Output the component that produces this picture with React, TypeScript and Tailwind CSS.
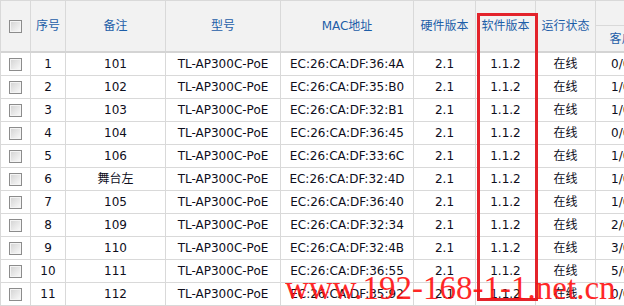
const rows: { no: number; note: string; mac: string; clients: string }[] = [
  { no: 1, note: '101', mac: 'EC:26:CA:DF:36:4A', clients: '0/0' },
  { no: 2, note: '102', mac: 'EC:26:CA:DF:35:B0', clients: '1/0' },
  { no: 3, note: '103', mac: 'EC:26:CA:DF:32:B1', clients: '1/0' },
  { no: 4, note: '104', mac: 'EC:26:CA:DF:36:45', clients: '0/0' },
  { no: 5, note: '106', mac: 'EC:26:CA:DF:33:6C', clients: '1/0' },
  { no: 6, note: '舞台左', mac: 'EC:26:CA:DF:32:4D', clients: '1/0' },
  { no: 7, note: '105', mac: 'EC:26:CA:DF:36:40', clients: '1/0' },
  { no: 8, note: '109', mac: 'EC:26:CA:DF:32:34', clients: '2/0' },
  { no: 9, note: '110', mac: 'EC:26:CA:DF:32:4B', clients: '3/0' },
  { no: 10, note: '111', mac: 'EC:26:CA:DF:36:55', clients: '5/0' },
  { no: 11, note: '112', mac: 'EC:26:CA:DF:35:92', clients: '0/0' },
];

const cols = 'grid grid-cols-[30px_35px_100px_115px_133px_62px_60px_60px_80px_80px]';
const cell = 'flex items-center justify-center border-r border-[#d9d9d9] whitespace-nowrap';

function Check() {
  return (
    <span className="block w-[13px] h-[13px] border border-[#8c8c8c] bg-gradient-to-br from-[#d2d2d2] to-[#fbfbfb] shadow-[inset_0_0_0_1px_#f4f4f4]" />
  );
}

export default function App() {
  return (
    <div
      className="relative w-[624px] h-[306px] overflow-hidden bg-white text-[12px]"
      style={{ fontFamily: '"DejaVu Sans", "Noto Sans CJK SC", sans-serif' }}
    >
      <div className="w-max border-l border-t border-[#d9d9d9]">
        {/* header */}
        <div className={`${cols} h-[52px] bg-[#f2f2f2] border-b-2 border-[#d4d4d4] text-[#1d5ea8]`}>
          <div className={cell}><Check /></div>
          <div className={cell}>序号</div>
          <div className={cell}>备注</div>
          <div className={cell}>型号</div>
          <div className={cell}>MAC地址</div>
          <div className={cell}>硬件版本</div>
          <div className={cell}>软件版本</div>
          <div className={cell}>运行状态</div>
          <div className="col-span-2 flex flex-col">
            <div className="h-[25px] border-b border-[#d9d9d9]" />
            <div className="flex flex-1">
              <div className={`${cell} w-[76px]`}>客户端数</div>
              <div className={`${cell} w-[84px]`} />
            </div>
          </div>
        </div>

        {/* body */}
        {rows.map(r => (
          <div key={r.no} className={`${cols} h-[23px] border-b border-[#d9d9d9] text-[#0e0e1c]`}>
            <div className={cell}><Check /></div>
            <div className={cell}>{r.no}</div>
            <div className={cell}>{r.note}</div>
            <div className={cell}>TL-AP300C-PoE</div>
            <div className={cell}>{r.mac}</div>
            <div className={cell}>2.1</div>
            <div className={cell}>1.1.2</div>
            <div className={cell}>在线</div>
            <div className={`${cell} justify-start pl-[15px]`}>{r.clients}</div>
            <div className={cell} />
          </div>
        ))}
      </div>

      {/* highlight box */}
      <div className="absolute left-[477px] top-[13px] w-[61px] h-[288px] border-[3px] border-[#e3232b]" />

      {/* watermark */}
      <div
        className="absolute left-[285px] top-[272px] text-[33px] leading-none text-[#ff1010] opacity-90 whitespace-nowrap"
        style={{ fontFamily: '"Liberation Serif", serif' }}
      >
        www.192-168-1-1.net.cn
      </div>
    </div>
  );
}
